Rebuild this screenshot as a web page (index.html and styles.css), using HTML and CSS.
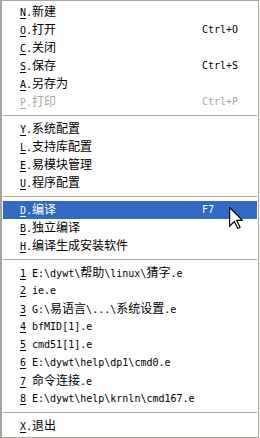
FILE: index.html
```html
<!DOCTYPE html>
<html>
<head>
<meta charset="utf-8">
<link rel="stylesheet" href="styles.css">
</head>
<body>
<div class="menu">
  <div class="item"><span class="label"><span class="l"><u>N</u>.</span>新建</span></div>
  <div class="item"><span class="label"><span class="l"><u>O</u>.</span>打开</span><span class="key l">Ctrl+O</span></div>
  <div class="item"><span class="label"><span class="l"><u>C</u>.</span>关闭</span></div>
  <div class="item"><span class="label"><span class="l"><u>S</u>.</span>保存</span><span class="key l">Ctrl+S</span></div>
  <div class="item"><span class="label"><span class="l"><u>A</u>.</span>另存为</span></div>
  <div class="item disabled"><span class="label"><span class="l"><u>P</u>.</span>打印</span><span class="key l">Ctrl+P</span></div>
  <div class="sep"></div>
  <div class="item"><span class="label"><span class="l"><u>Y</u>.</span>系统配置</span></div>
  <div class="item"><span class="label"><span class="l"><u>L</u>.</span>支持库配置</span></div>
  <div class="item"><span class="label"><span class="l"><u>E</u>.</span>易模块管理</span></div>
  <div class="item"><span class="label"><span class="l"><u>U</u>.</span>程序配置</span></div>
  <div class="sep"></div>
  <div class="item active"><span class="label"><span class="l"><u>D</u>.</span>编译</span><span class="key l">F7</span></div>
  <div class="item"><span class="label"><span class="l"><u>B</u>.</span>独立编译</span></div>
  <div class="item"><span class="label"><span class="l"><u>H</u>.</span>编译生成安装软件</span></div>
  <div class="sep"></div>
  <div class="item"><span class="label"><span class="l num"><u>1</u></span><span class="l">E:\dywt\</span>帮助<span class="l">\linux\</span>猜字<span class="l">.e</span></span></div>
  <div class="item"><span class="label"><span class="l num"><u>2</u></span><span class="l">ie.e</span></span></div>
  <div class="item"><span class="label"><span class="l num"><u>3</u></span><span class="l">G:\</span>易语言<span class="l">\...\</span>系统设置<span class="l">.e</span></span></div>
  <div class="item"><span class="label"><span class="l num"><u>4</u></span><span class="l">bfMID[1].e</span></span></div>
  <div class="item"><span class="label"><span class="l num"><u>5</u></span><span class="l">cmd51[1].e</span></span></div>
  <div class="item"><span class="label"><span class="l num"><u>6</u></span><span class="l">E:\dywt\help\dp1\cmd0.e</span></span></div>
  <div class="item"><span class="label"><span class="l num"><u>7</u></span>命令连接<span class="l">.e</span></span></div>
  <div class="item"><span class="label"><span class="l num"><u>8</u></span><span class="l">E:\dywt\help\krnln\cmd167.e</span></span></div>
  <div class="sep"></div>
  <div class="item"><span class="label"><span class="l"><u>X</u>.</span>退出</span></div>
</div>
<svg class="cursor" width="14" height="22" viewBox="0 0 12 19">
  <path d="M0.5 0.5 V16.5 L4.5 12.5 L7.5 18.5 L9.5 17.5 L6.5 11.5 H11.5 Z" fill="#fff" stroke="#000" stroke-width="1" stroke-linejoin="miter"/>
</svg>
</body>
</html>
```

FILE: styles.css
```css
html, body {
  margin: 0;
  padding: 0;
  background: #fff;
}
body {
  position: relative;
  width: 260px;
  height: 438px;
  overflow: hidden;
  font-family: "Noto Sans CJK SC", sans-serif;
  font-size: 12px;
  color: #000;
}
.menu {
  box-sizing: border-box;
  width: 259px;
  height: 438px;
  border: 1px solid #a7a59d;
  border-left-width: 2px;
  padding: 2px 1px;
  display: flex;
  flex-direction: column;
}
.item {
  display: flex;
  align-items: center;
  height: 18px;
  line-height: 18px;
  padding-left: 17px;
  white-space: nowrap;
}
.label {
  width: 182px;
  display: flex;
  align-items: baseline;
}
.key {
  flex: none;
}
.l {
  font-family: "DejaVu Sans Mono", monospace;
  font-size: 10px;
}
.num {
  margin-right: 6px;
}
u {
  text-decoration: underline;
  text-underline-offset: 2px;
}
.disabled {
  color: #aca899;
}
.active {
  background: #316ac5;
  color: #fff;
}
.sep {
  height: 9px;
  display: flex;
  align-items: center;
}
.sep::before {
  content: "";
  display: block;
  width: 100%;
  height: 1px;
  background: #aca899;
}
.cursor {
  position: absolute;
  left: 229px;
  top: 207px;
}
```
